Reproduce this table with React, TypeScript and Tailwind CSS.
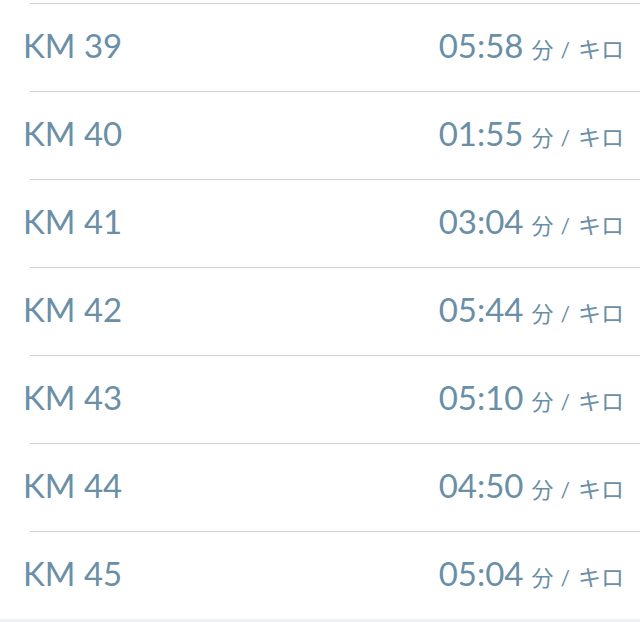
import React from "react";

const rows = [
  ["KM 39", "05:58"],
  ["KM 40", "01:55"],
  ["KM 41", "03:04"],
  ["KM 42", "05:44"],
  ["KM 43", "05:10"],
  ["KM 44", "04:50"],
  ["KM 45", "05:04"],
];

const cjk = { fontFamily: "'Noto Sans CJK JP', sans-serif" };

export default function App() {
  return (
    <div className="w-[640px] h-[622px] bg-[#eef1f4] overflow-hidden" style={{ fontFamily: "Lato, 'Noto Sans CJK JP', sans-serif" }}>
      <div className="bg-white">
        <div className="h-[3px]" />
        <div className="ml-[30px] h-px bg-[#c9d1d8]" />
        {rows.map(([km, t], i) => (
          <div key={km}>
            <div className="h-[87px] flex items-center justify-between pl-[23px] pr-[16px] pb-[4px] text-[#6a8fa6]">
              <span className="text-[33px] leading-none">{km}</span>
              <span className="flex items-baseline">
                <span className="text-[33px] leading-none">{t}</span>
                <span className="ml-[8px] text-[22px] leading-none" style={cjk}>分</span>
                <span className="ml-[7px] text-[21px] leading-none">/</span>
                <span className="ml-[8px] text-[23px] leading-none" style={cjk}>キロ</span>
              </span>
            </div>
            {i < rows.length - 1 && <div className="ml-[30px] h-px bg-[#c9d1d8]" />}
          </div>
        ))}
      </div>
    </div>
  );
}
